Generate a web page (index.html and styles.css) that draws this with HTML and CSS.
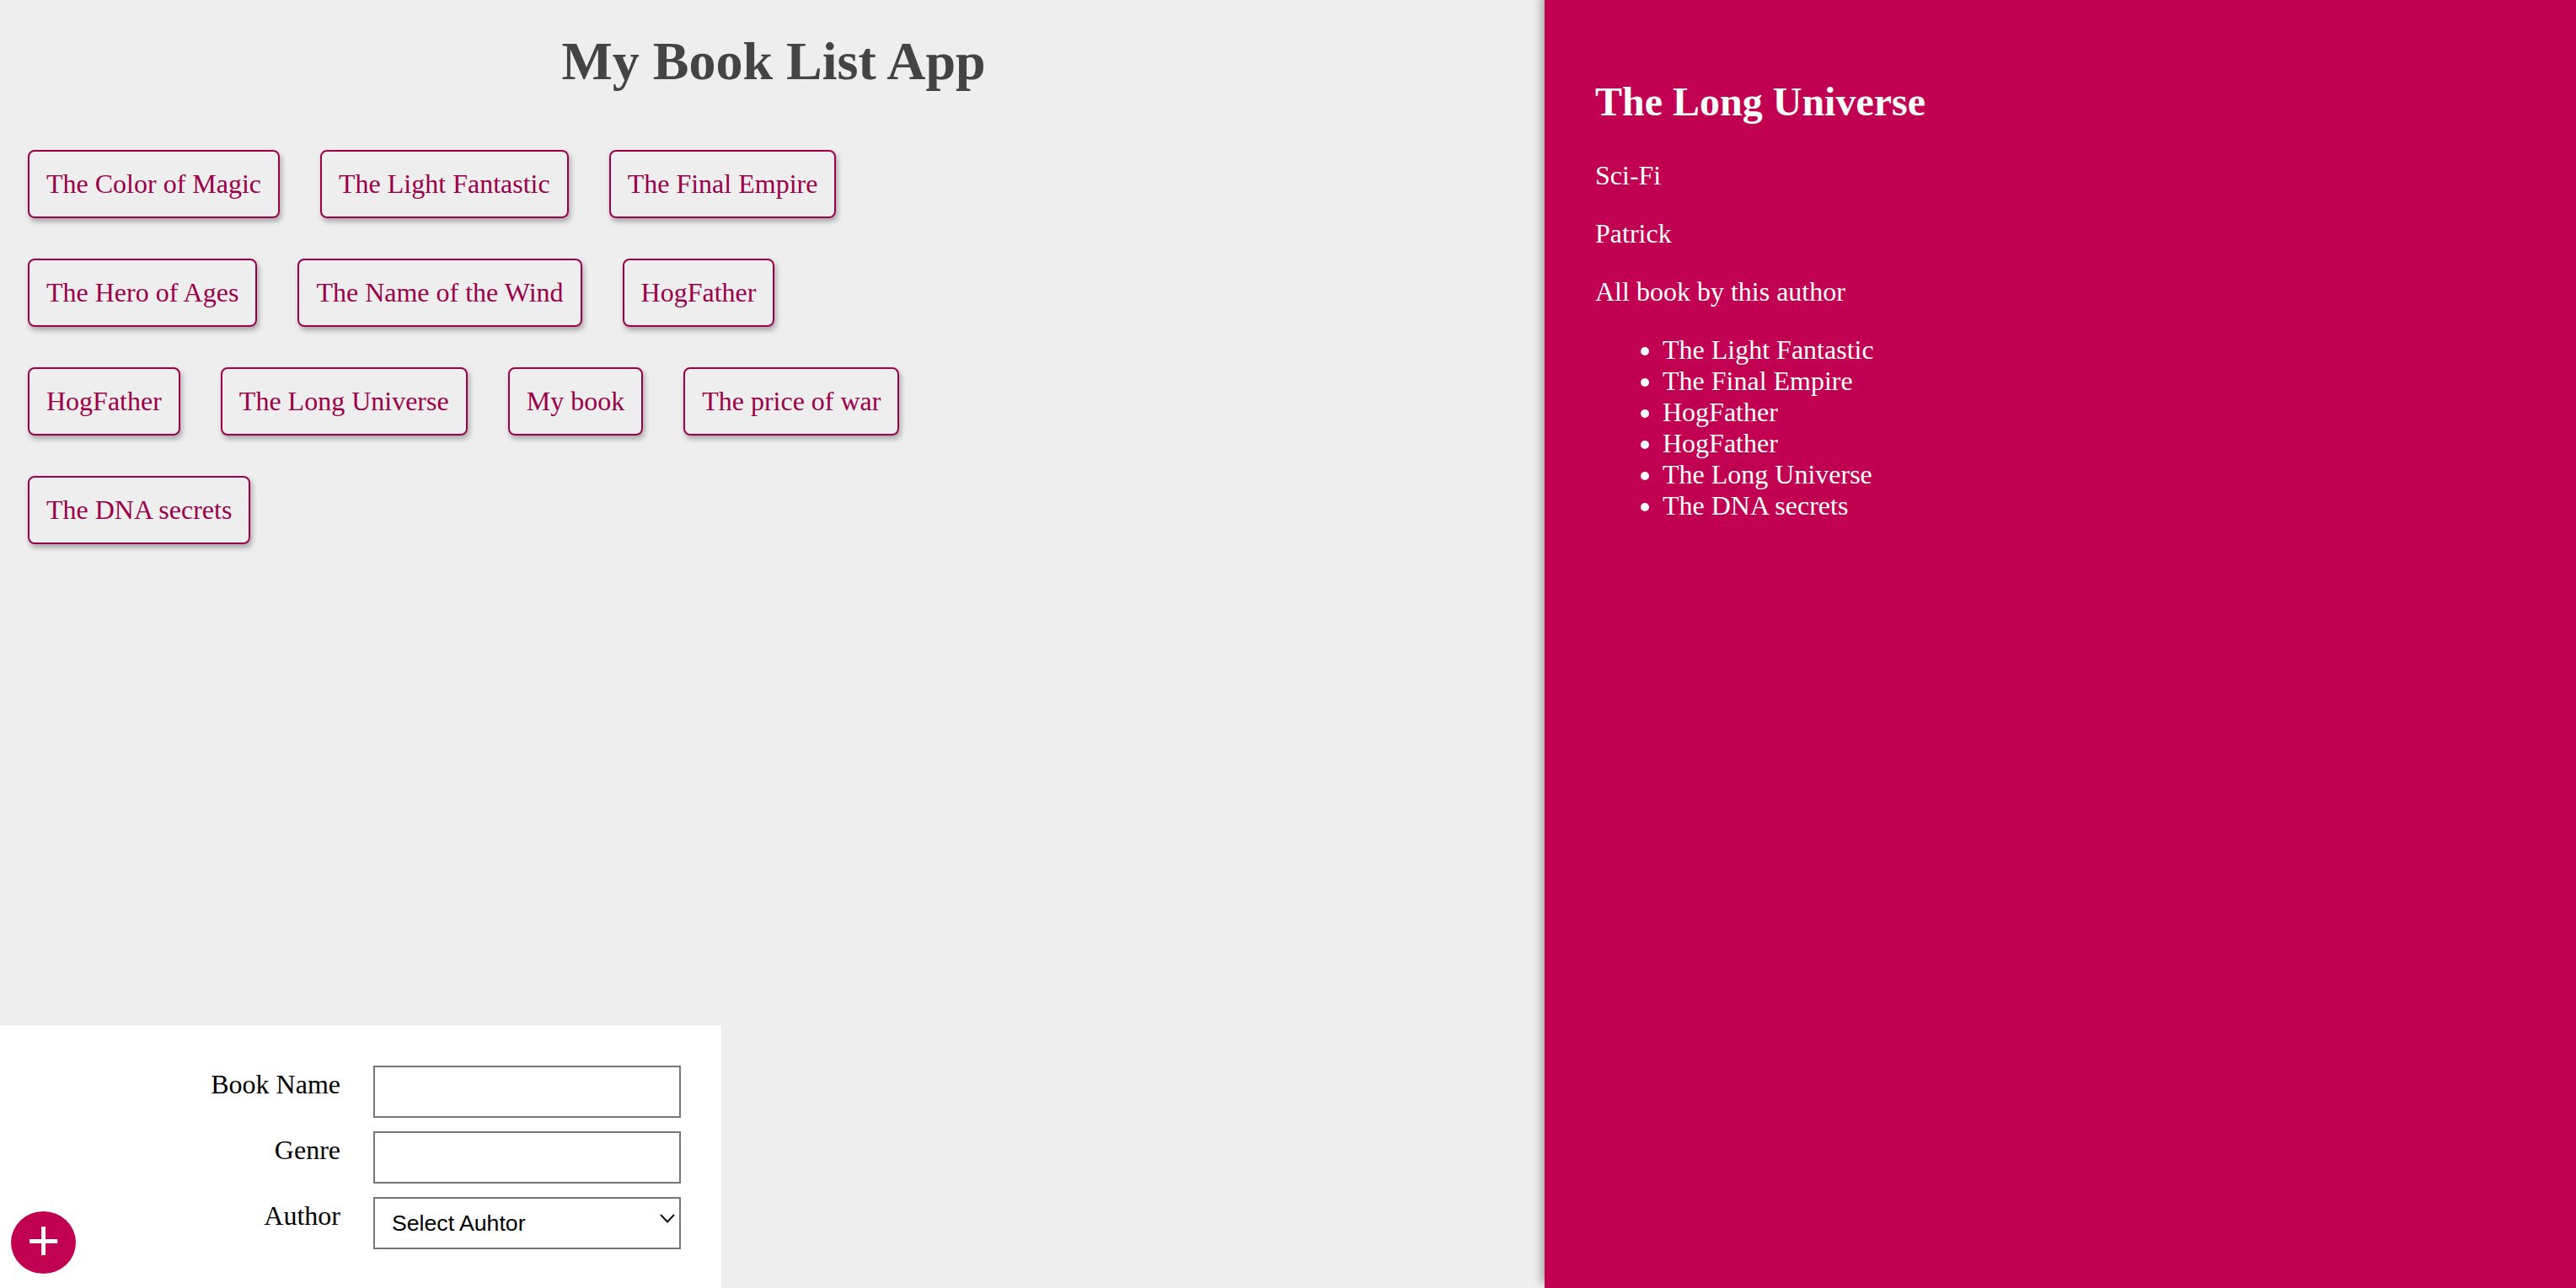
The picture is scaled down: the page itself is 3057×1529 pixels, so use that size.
FILE: index.html
```html
<!DOCTYPE html>
<html lang="en">
<head>
<meta charset="utf-8">
<title>My Book List App</title>
<link rel="stylesheet" href="styles.css">
</head>
<body>
<div class="app">
  <main class="main">
    <h1 class="title">My Book List App</h1>
    <ul class="book-list"><li class="book">The Color of Magic</li><li class="book">The Light Fantastic</li><li class="book">The Final Empire</li><li class="book">The Hero of Ages</li><li class="book">The Name of the Wind</li><li class="book">HogFather</li><li class="book">HogFather</li><li class="book">The Long Universe</li><li class="book">My book</li><li class="book">The price of war</li><li class="book">The DNA secrets</li></ul>
    <form class="add-form">
      <div class="field">
        <label class="field-label">Book Name</label>
        <input class="field-input" type="text">
      </div>
      <div class="field">
        <label class="field-label">Genre</label>
        <input class="field-input" type="text">
      </div>
      <div class="field">
        <label class="field-label">Author</label>
        <div class="select-wrap">
          <select class="field-select">
            <option>Select Auhtor</option>
          </select>
          <svg class="chevron" width="18" height="11" viewBox="0 0 18 11"><path d="M1 1 L9 9.5 L17 1" fill="none" stroke="#111" stroke-width="2"/></svg>
        </div>
      </div>
      <button class="add-btn" type="button">+</button>
    </form>
  </main>
  <aside class="details">
    <h2 class="details-title">The Long Universe</h2>
    <p class="details-text">Sci-Fi</p>
    <p class="details-text">Patrick</p>
    <p class="details-text">All book by this author</p>
    <ul class="author-books">
      <li>The Light Fantastic</li>
      <li>The Final Empire</li>
      <li>HogFather</li>
      <li>HogFather</li>
      <li>The Long Universe</li>
      <li>The DNA secrets</li>
    </ul>
  </aside>
</div>
</body>
</html>
```

FILE: styles.css
```css
html, body {
  margin: 0;
  padding: 0;
  height: 100%;
}
body {
  background: #eeeeee;
  font-family: "Liberation Serif", "Times New Roman", serif;
  font-size: 32px;
  overflow: hidden;
}
.app {
  display: flex;
  height: 100vh;
}
.main {
  width: 1833px;
  flex: 0 0 1833px;
  display: flex;
  flex-direction: column;
  box-sizing: border-box;
}
.title {
  color: #444444;
  text-align: center;
  font-size: 64px;
  font-weight: bold;
  margin: 36px 0 0;
  padding-left: 3px;
}
.book-list {
  list-style: none;
  margin: 0;
  padding: 44px 0 0 9px;
  width: 1130px;
  box-sizing: border-box;
  display: flex;
  flex-wrap: wrap;
  align-content: flex-start;
  flex: 1;
}
.book {
  margin: 24px;
  padding: 20px;
  border: 2px solid #9b004a;
  border-radius: 8px;
  box-shadow: 2px 4px 6px rgba(0, 0, 0, 0.3);
  color: #9b004a;
  cursor: pointer;
}
.add-form {
  position: relative;
  align-self: flex-start;
  width: 856px;
  box-sizing: border-box;
  background: #ffffff;
  padding: 40px 48px 38px 40px;
}
.field {
  display: grid;
  grid-template-columns: 374px 365px;
  column-gap: 29px;
}
.field-label {
  text-align: right;
  padding: 12px 10px 0;
  color: #000;
}
.field-input,
.field-select {
  display: block;
  width: 100%;
  height: 62px;
  margin: 8px 0;
  box-sizing: border-box;
  border: 2px solid #767676;
  border-radius: 0;
  background: #ffffff;
}
.field-input {
  padding: 12px;
  font-family: "Liberation Sans", Arial, sans-serif;
  font-size: 26.67px;
}
.select-wrap {
  position: relative;
}
.field-select {
  -webkit-appearance: none;
  appearance: none;
  padding: 0 40px 0 20px;
  font-family: "Liberation Sans", Arial, sans-serif;
  font-size: 26.67px;
  color: #000;
}
.chevron {
  position: absolute;
  right: 7px;
  top: 28px;
  pointer-events: none;
}
.add-btn {
  position: absolute;
  left: 13px;
  bottom: 17px;
  width: 77px;
  height: 74px;
  border: 0;
  border-radius: 50%;
  background: #c20052;
  color: #ffffff;
  font-family: "Liberation Sans", Arial, sans-serif;
  font-size: 68px;
  line-height: 1;
  padding: 0 0 6px;
  display: flex;
  align-items: center;
  justify-content: center;
  cursor: pointer;
}
.details {
  flex: 1;
  box-sizing: border-box;
  background: #c20052;
  color: #ffffff;
  padding: 60px;
  box-shadow: -4px -6px 10px rgba(0, 0, 0, 0.3);
  overflow: auto;
}
.details-title {
  font-size: 48px;
  font-weight: bold;
  margin: 33px 0 42px;
}
.details-text {
  margin: 32px 0;
}
.details-title + .details-text {
  margin-top: 0;
}
.author-books {
  margin: 30px 0 32px;
  padding-left: 80px;
}
```
